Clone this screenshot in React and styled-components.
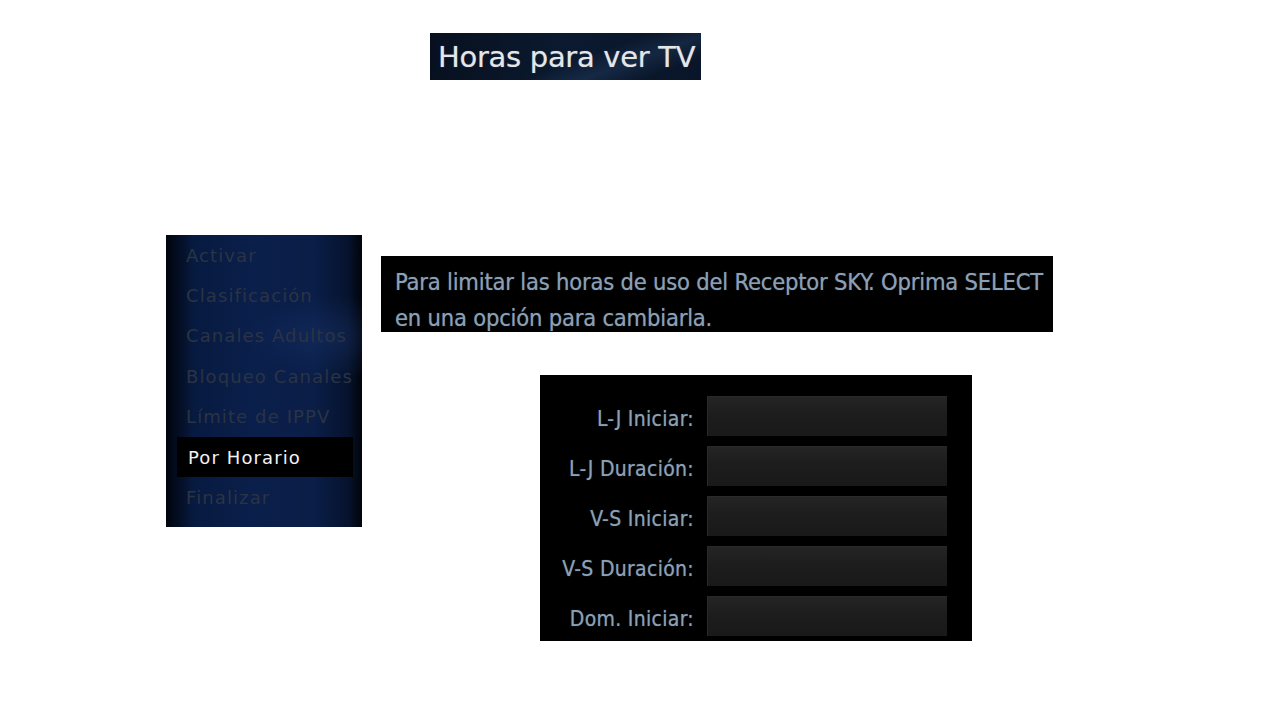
import React from "react";
import styled, { createGlobalStyle } from "styled-components";

const Global = createGlobalStyle`
  html, body { margin: 0; padding: 0; background: #ffffff; }
  body { font-family: "DejaVu Sans", sans-serif; }
`;

const Page = styled.div`
  width: 1280px;
  height: 720px;
  background: #ffffff;
  overflow: hidden;
`;

const TitleWrap = styled.div`
  padding: 33px 0 0 430px;
`;

const Title = styled.h1`
  margin: 0;
  width: 271px;
  height: 47px;
  box-sizing: border-box;
  padding-left: 8px;
  display: flex;
  align-items: center;
  background:
    linear-gradient(160deg, transparent 55%, rgba(40, 70, 110, 0.35) 70%, transparent 85%),
    linear-gradient(90deg, #07101f 0%, #0b1a30 50%, #091528 100%);
  color: #e4e6e8;
  font-family: "DejaVu Sans", sans-serif;
  font-weight: normal;
  font-size: 29px;
  letter-spacing: -0.3px;
  white-space: nowrap;
  overflow: hidden;
  text-shadow: 0 0 1px rgba(228, 230, 232, 0.5);
`;

const Main = styled.div`
  display: flex;
  align-items: flex-start;
  gap: 19px;
  margin-top: 155px;
  padding-left: 166px;
`;

const Menu = styled.ul`
  list-style: none;
  margin: 0;
  width: 196px;
  height: 292px;
  box-sizing: border-box;
  padding: 0 9px 0 11px;
  background:
    radial-gradient(ellipse 120px 60px at 85% 35%, rgba(30, 60, 120, 0.35), transparent 70%),
    linear-gradient(90deg, #01040a 0%, #030a1a 4%, #071a40 14%, #0a1f4b 45%, #0a1e48 75%, #06132e 93%, #01040a 100%);
`;

const MenuItem = styled.li`
  height: 40.4px;
  display: flex;
  align-items: center;
  padding-left: ${(p) => (p.$active ? "11px" : "9px")};
  font-family: "DejaVu Sans", sans-serif;
  font-size: 18px;
  letter-spacing: 1.1px;
  white-space: nowrap;
  color: ${(p) => (p.$active ? "#f2f2f2" : "#2b3344")};
  background: ${(p) => (p.$active ? "#000000" : "transparent")};
`;

const Right = styled.div`
  display: flex;
  flex-direction: column;
  padding-top: 21px;
`;

const Description = styled.p`
  margin: 0;
  width: 672px;
  height: 76px;
  box-sizing: border-box;
  padding: 8px 0 0 14px;
  background: #000000;
  color: #8aa0b6;
  font-family: "DejaVu Sans Condensed", "DejaVu Sans", sans-serif;
  font-size: 23.5px;
  line-height: 36px;
  letter-spacing: -0.2px;
  white-space: nowrap;
  overflow: hidden;
  text-shadow: 0 0 1px rgba(138, 160, 182, 0.6);
`;

const Form = styled.div`
  margin: 43px 0 0 159px;
  width: 432px;
  height: 266px;
  box-sizing: border-box;
  padding: 21px 25px 0 0;
  background: #000000;
  display: grid;
  grid-template-columns: 154px 240px;
  column-gap: 13px;
  grid-auto-rows: 40px;
  row-gap: 10px;
`;

const Label = styled.span`
  display: flex;
  align-items: center;
  justify-content: flex-end;
  color: #8aa0b6;
  font-family: "DejaVu Sans Condensed", "DejaVu Sans", sans-serif;
  font-size: 21px;
  letter-spacing: 0.3px;
  white-space: nowrap;
  padding-top: 6px;
  text-shadow: 0 0 1px rgba(138, 160, 182, 0.6);
`;

const Field = styled.div`
  background: linear-gradient(180deg, #252525 0%, #1d1d1d 45%, #191919 100%);
  box-shadow: inset 1px 1px 0 #2a2a2a;
`;

const menu = [
  "Activar",
  "Clasificación",
  "Canales Adultos",
  "Bloqueo Canales",
  "Límite de IPPV",
  "Por Horario",
  "Finalizar",
];

const fields = [
  "L-J Iniciar:",
  "L-J Duración:",
  "V-S Iniciar:",
  "V-S Duración:",
  "Dom. Iniciar:",
];

export default function App() {
  return (
    <Page>
      <Global />
      <TitleWrap>
        <Title>Horas para ver TV</Title>
      </TitleWrap>
      <Main>
        <Menu>
          {menu.map((m) => (
            <MenuItem key={m} $active={m === "Por Horario"}>
              {m}
            </MenuItem>
          ))}
        </Menu>
        <Right>
          <Description>
            Para limitar las horas de uso del Receptor SKY. Oprima SELECT
            <br />
            en una opción para cambiarla.
          </Description>
          <Form>
            {fields.map((f) => (
              <React.Fragment key={f}>
                <Label>{f}</Label>
                <Field />
              </React.Fragment>
            ))}
          </Form>
        </Right>
      </Main>
    </Page>
  );
}
